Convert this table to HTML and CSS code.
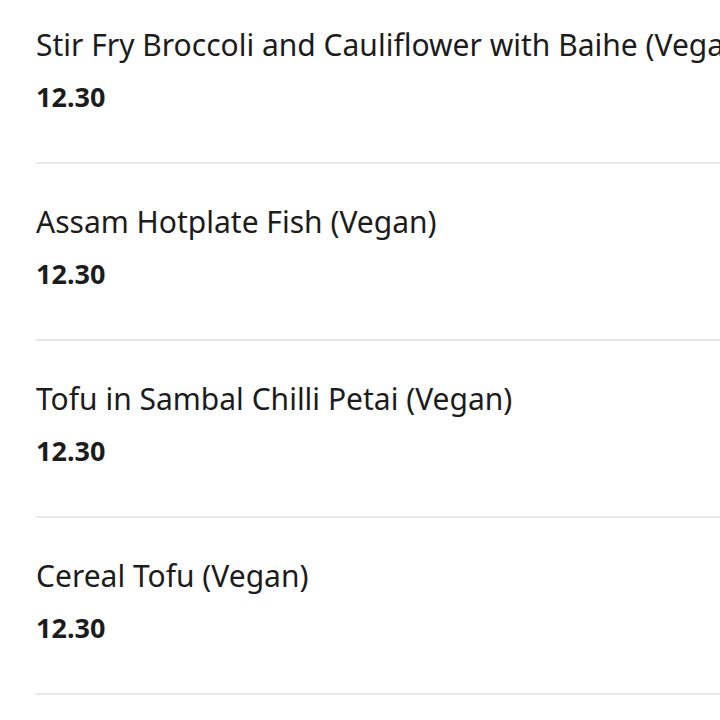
FILE: index.html
```html
<!DOCTYPE html>
<html>
<head>
<meta charset="utf-8">
<link rel="stylesheet" href="styles.css">
</head>
<body>
<ul class="menu">
  <li class="item first">
    <div class="name">Stir Fry Broccoli and Cauliflower with Baihe (Vegan)</div>
    <div class="price">12.30</div>
  </li>
  <li class="item">
    <div class="name">Assam Hotplate Fish (Vegan)</div>
    <div class="price">12.30</div>
  </li>
  <li class="item">
    <div class="name">Tofu in Sambal Chilli Petai (Vegan)</div>
    <div class="price">12.30</div>
  </li>
  <li class="item">
    <div class="name">Cereal Tofu (Vegan)</div>
    <div class="price">12.30</div>
  </li>
</ul>
</body>
</html>
```
FILE: styles.css
```css
html, body {
  margin: 0;
  padding: 0;
  background: #ffffff;
  overflow: hidden;
}
body {
  font-family: "Noto Sans", "Open Sans", sans-serif;
  color: #1c1c1c;
}
.menu {
  list-style: none;
  margin: 0;
  padding: 0 0 0 36px;
}
.item {
  display: flex;
  flex-direction: column;
  gap: 14px;
  padding: 38px 0 47px;
  border-bottom: 2px solid #e8e8e8;
}
.item.first {
  padding-top: 25px;
}
.name {
  font-size: 30px;
  line-height: 40px;
  white-space: nowrap;
  overflow: hidden;
}
.price {
  font-size: 27px;
  line-height: 36px;
  font-weight: 700;
}
```
